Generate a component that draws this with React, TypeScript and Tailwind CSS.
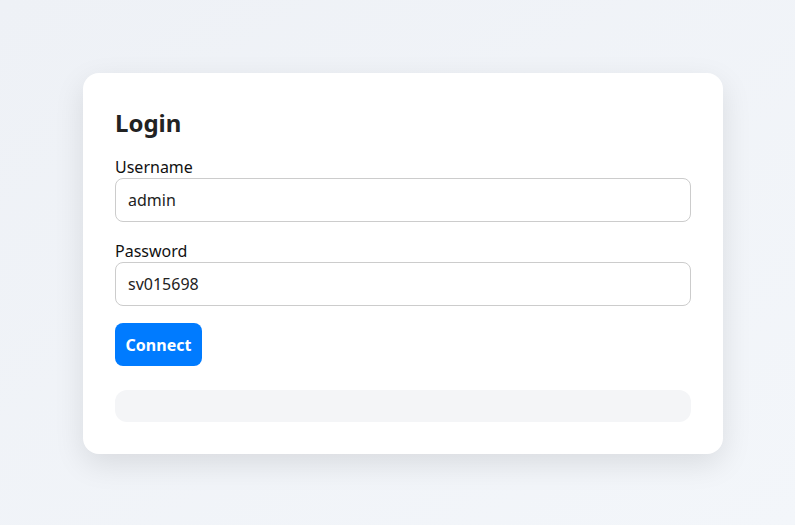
import { useState } from 'react'

export default function App() {
  const [username, setUsername] = useState('admin')
  const [password, setPassword] = useState('sv015698')

  return (
    <div className="min-h-[525px] w-full flex items-center justify-center pl-[11px] pt-[2px] bg-linear-to-br from-[#eef1f6] to-[#f3f6fa] font-['Noto_Sans',sans-serif]">
      <div className="w-[640px] rounded-2xl bg-white p-8 shadow-[0_10px_30px_rgba(0,0,0,0.1)]">
        {/* Title */}
        <h1 className="text-2xl font-bold leading-[35px] text-[#222] mb-[16px]">Login</h1>

        {/* Username */}
        <label className="block text-base leading-[22px] text-[#111]">Username</label>
        <input
          value={username}
          onChange={(e) => setUsername(e.target.value)}
          className="block w-full h-[44px] px-3 rounded-lg border border-[#ccc] text-base text-[#222] outline-none"
        />

        {/* Password */}
        <label className="block mt-[18px] text-base leading-[22px] text-[#111]">Password</label>
        <input
          value={password}
          onChange={(e) => setPassword(e.target.value)}
          className="block w-full h-[44px] px-3 rounded-lg border border-[#ccc] text-base text-[#222] outline-none"
        />

        {/* Submit */}
        <button className="mt-[17px] w-[87px] h-[43px] rounded-lg bg-[#007bff] text-white text-base font-bold flex items-center justify-center">
          Connect
        </button>

        {/* Status */}
        <div className="mt-6 h-8 rounded-xl bg-[#f4f5f7]" />
      </div>
    </div>
  )
}
